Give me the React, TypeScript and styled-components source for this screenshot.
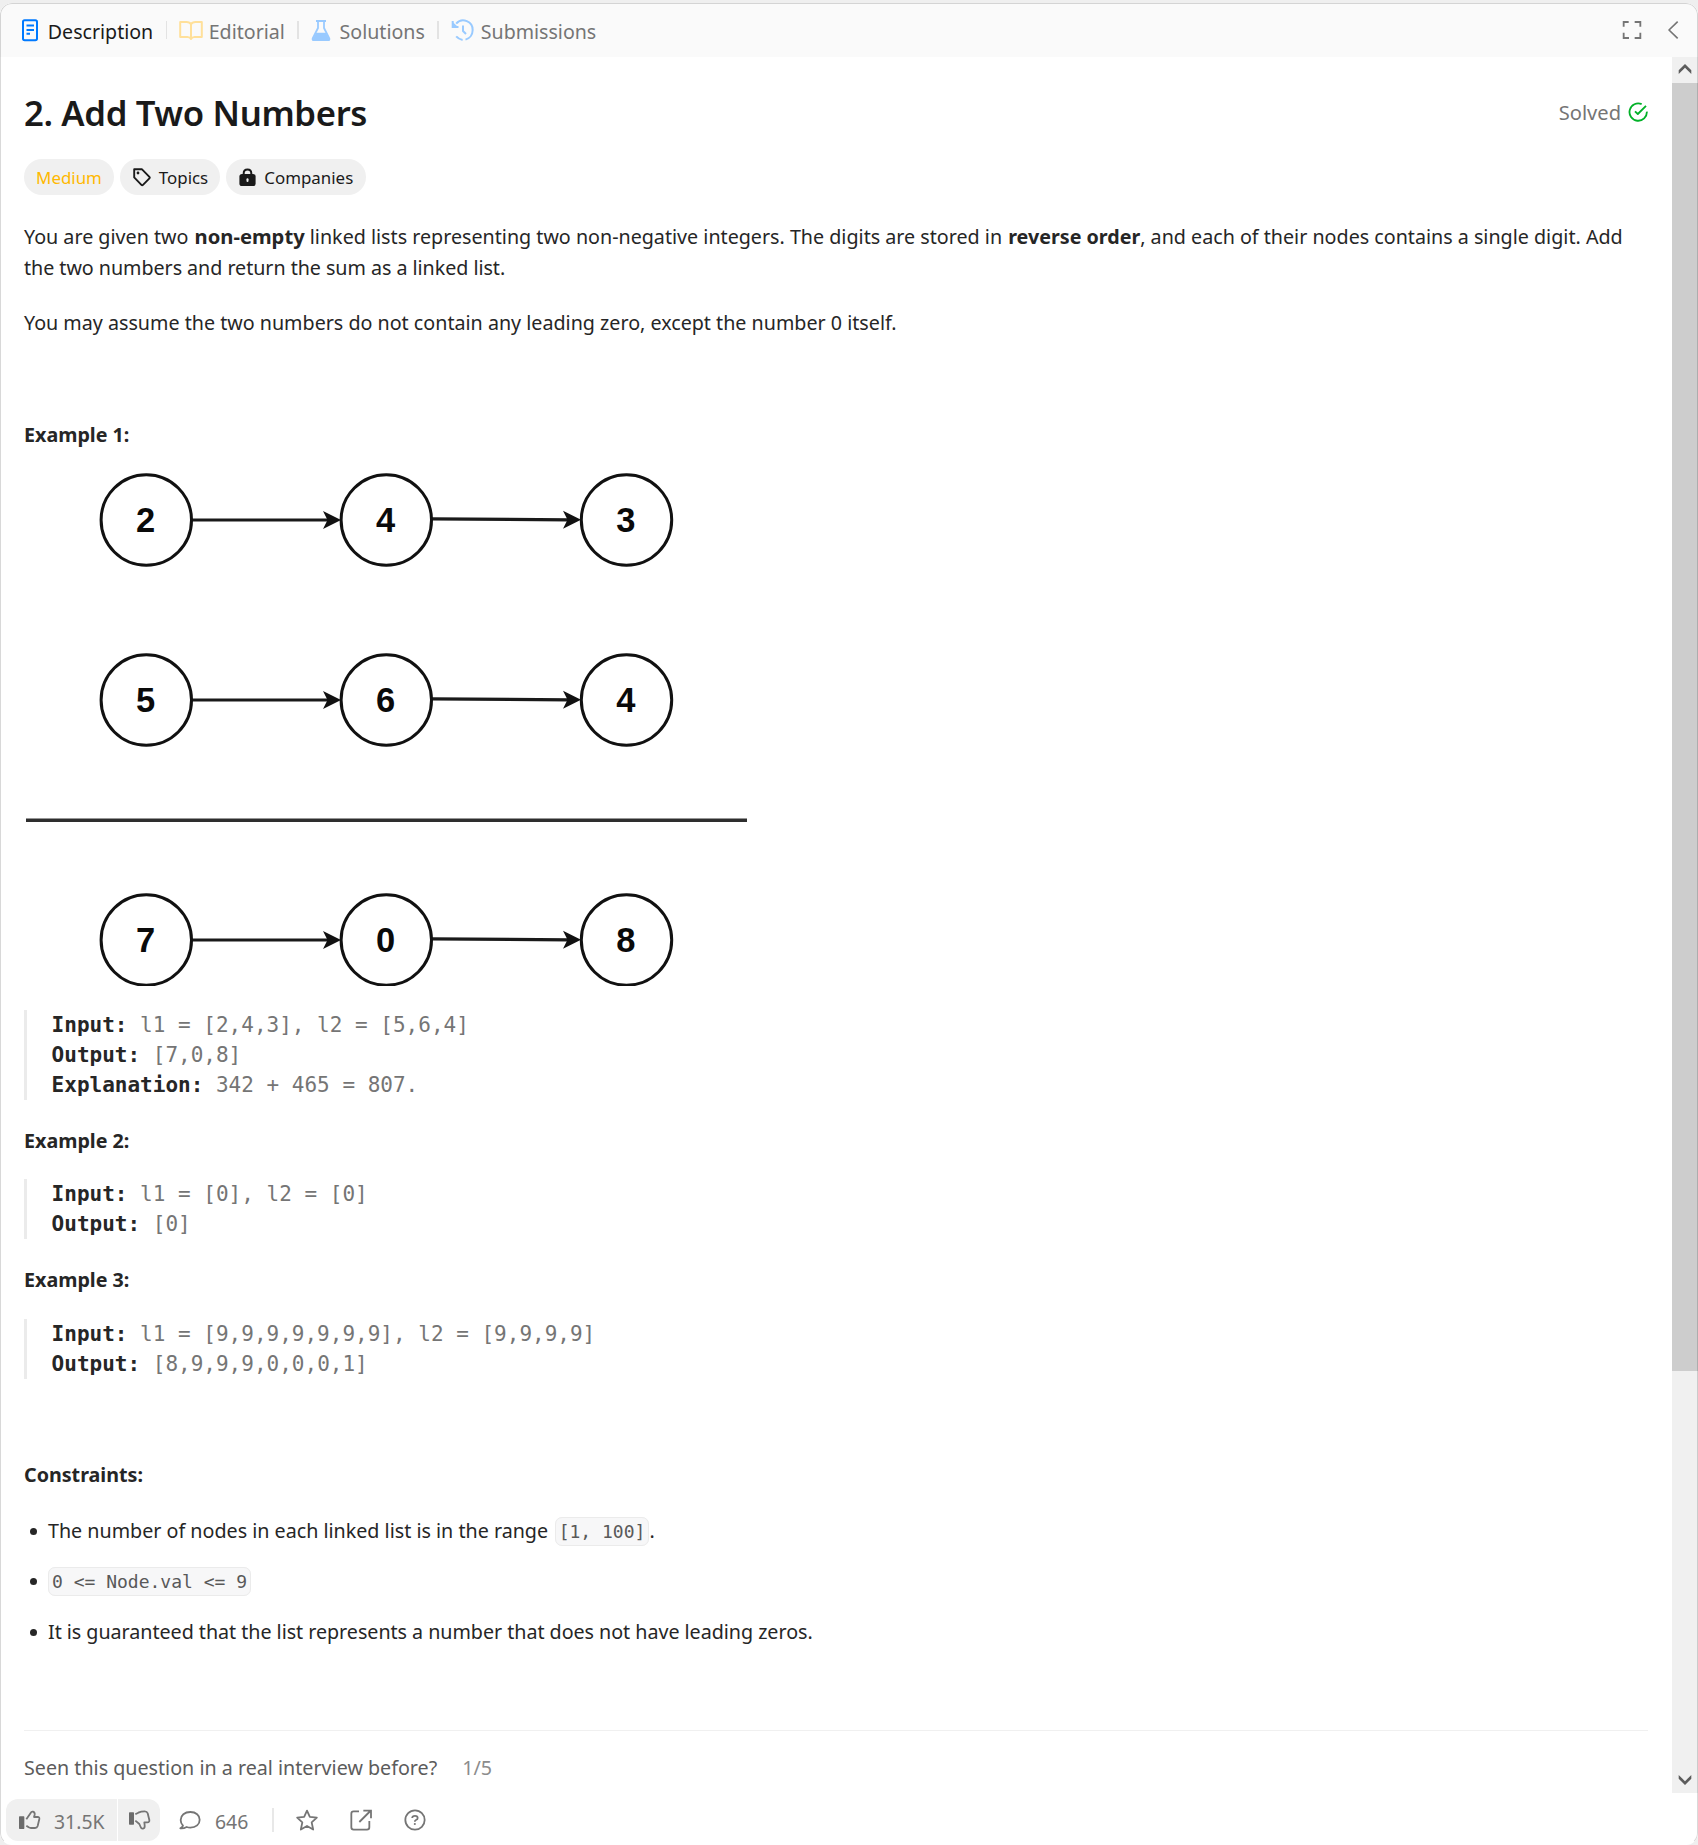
import React from "react";
import styled, { createGlobalStyle } from "styled-components";

const sans = `"Noto Sans", "Open Sans", sans-serif`;
const mono = `"DejaVu Sans Mono", monospace`;

const GlobalStyle = createGlobalStyle`
  * { box-sizing: border-box; }
  html, body { margin: 0; padding: 0; background: #efefef; }
  body { font-family: ${sans}; font-size: 19.7px; color: #262626; }
  svg { display: block; flex: none; }
`;

const Page = styled.div`
  height: 1845px;
  padding-top: 3px;
  overflow: hidden;
`;

const Panel = styled.section`
  position: relative;
  display: flex;
  flex-direction: column;
  height: 1842px;
  border-radius: 12px;
  overflow: hidden;
  background: #fff;
  &::after {
    content: "";
    position: absolute;
    inset: 0;
    border: 1px solid rgba(0, 0, 0, 0.15);
    border-bottom-color: transparent;
    border-radius: 12px;
    pointer-events: none;
  }
`;

const TabBar = styled.header`
  display: flex;
  align-items: center;
  height: 54px;
  flex: none;
  padding: 0 19px 0 21px;
  background: #fafafa;
`;

const Tab = styled.div<{ $gap: number; $active?: boolean }>`
  display: flex;
  align-items: center;
  gap: ${(p) => p.$gap}px;
  font-size: 19.6px;
  color: ${(p) => (p.$active ? "#1a1a1a" : "#757575")};
`;

const TabLabel = styled.span`
  padding-top: 3px;
  line-height: 27px;
`;

const TabDivider = styled.i`
  width: 1.5px;
  height: 18px;
  margin: 0 12.3px;
  background: #e3e3e3;
`;

const TabActions = styled.div`
  display: flex;
  align-items: center;
  gap: 25px;
  margin-left: auto;
`;

const Body = styled.div`
  display: flex;
  height: 1736px;
  flex: none;
`;

const Content = styled.main`
  flex: 1;
  padding: 0 24px;
`;

const TitleRow = styled.div`
  display: flex;
  justify-content: space-between;
  align-items: center;
  height: 48px;
  margin-top: 32px;
`;

const Title = styled.h1`
  margin: 0;
  font-size: 34.7px;
  font-weight: 600;
  line-height: 48px;
  letter-spacing: -0.36px;
  color: #1a1a1a;
`;

const Solved = styled.div`
  display: flex;
  align-items: center;
  gap: 7px;
  height: 27px;
  margin-top: -3px;
  font-size: 20.1px;
  line-height: 27px;
  color: #757575;
  span { padding-top: 1px; }
`;

const Tags = styled.div`
  display: flex;
  gap: 6px;
  margin-top: 22px;
`;

const Tag = styled.span<{ $width: number; $tone?: string; $gap?: number }>`
  display: flex;
  align-items: center;
  justify-content: center;
  gap: ${(p) => p.$gap ?? 0}px;
  width: ${(p) => p.$width}px;
  height: 36px;
  border-radius: 18px;
  background: #f0f0f0;
  color: ${(p) => p.$tone ?? "#1a1a1a"};
  font-size: 16.9px;
  line-height: 36px;
  span { padding-top: 1px; }
`;

const Prose = styled.article`
  margin-top: 27px;
  line-height: 30.6px;
`;

const Paragraph = styled.p<{ $after?: number }>`
  margin: 0 0 ${(p) => p.$after ?? 25.2}px;
  white-space: pre-wrap;
`;

const Emphasis = styled.strong<{ $size?: number }>`
  margin-left: 1px;
  font-size: ${(p) => p.$size ?? 19.7}px;
  line-height: 1;
`;

const Tracked = styled.span`
  letter-spacing: -0.04px;
`;

const Heading = styled.p<{ $after?: number }>`
  margin: 0 0 ${(p) => p.$after ?? 22.4}px;
  font-weight: 700;
`;

const Figure = styled.svg`
  margin-bottom: 24px;
  text { font: 700 34.5px "Liberation Sans", Arial, sans-serif; text-anchor: middle; }
`;

const Sample = styled.pre`
  margin: 0 0 26.2px;
  padding-left: 24.6px;
  border-left: 3px solid #ebebeb;
  font-family: ${mono};
  font-size: 21px;
  line-height: 30px;
  color: #757575;
  strong { color: #262626; }
`;

const List = styled.ul`
  margin: 0;
  padding: 0;
  list-style: none;
`;

const Item = styled.li<{ $tight?: boolean }>`
  display: flex;
  align-items: center;
  height: 30.6px;
  margin-bottom: 19.9px;
  letter-spacing: ${(p) => (p.$tight ? "-0.03px" : "0")};
  &::before {
    content: "";
    width: 7px;
    height: 7px;
    margin: 1px 11px 0 6px;
    border-radius: 50%;
    background: #262626;
  }
`;

const Code = styled.code<{ $left?: number }>`
  margin-left: ${(p) => p.$left ?? 0}px;
  padding: 3px;
  border: 1px solid #ebebeb;
  border-radius: 7px;
  background: #f7f7f8;
  font-family: ${mono};
  font-size: 18px;
  line-height: 1;
  color: #595959;
`;

const Survey = styled.div`
  display: flex;
  gap: 25px;
  margin-top: 83px;
  padding-top: 22px;
  border-top: 1px solid #f0f0f0;
  line-height: 29px;
  color: #5c5c5c;
`;

const SurveyCount = styled.span`
  color: #8c8c8c;
`;

const ScrollBar = styled.div`
  display: flex;
  flex-direction: column;
  width: 26px;
  background: #f0f0f0;
`;

const ScrollButton = styled.div<{ $lift?: number }>`
  display: flex;
  align-items: center;
  justify-content: center;
  height: 26px;
  padding-bottom: ${(p) => p.$lift ?? 0}px;
`;

const ScrollThumb = styled.div`
  height: 1288px;
  margin-bottom: auto;
  background: #cdcdcd;
`;

const Footer = styled.footer`
  display: flex;
  align-items: center;
  height: 42px;
  margin: 6px 0 0 6px;
  color: #757575;
`;

const VoteGroup = styled.div`
  display: flex;
  gap: 1px;
  height: 42px;
  border-radius: 12px;
  overflow: hidden;
`;

const Vote = styled.div<{ $width: number; $left: number }>`
  display: flex;
  align-items: center;
  width: ${(p) => p.$width}px;
  padding-left: ${(p) => p.$left}px;
  background: #f0f0f0;
`;

const Count = styled.span<{ $left: number }>`
  width: 53px;
  margin-left: ${(p) => p.$left}px;
  padding-top: 2px;
  font-size: 19.4px;
  line-height: 27px;
`;

const FooterDivider = styled.i`
  width: 2px;
  height: 24px;
  margin-left: 4px;
  background: #e8e8e8;
`;

const FooterAction = styled.span<{ $left: number }>`
  margin-left: ${(p) => p.$left}px;
`;

type GlyphProps = {
  w: number;
  h: number;
  box: string;
  color?: string;
  stroke?: number;
  children: React.ReactNode;
};

const Glyph = ({ w, h, box, color = "#757575", stroke = 5.4, children }: GlyphProps) => (
  <svg width={w} height={h} viewBox={box} fill="none" stroke={color} strokeWidth={stroke} strokeLinejoin="round">
    {children}
  </svg>
);

const DocIcon = () => (
  <Glyph w={18} h={24} box="21 18 18 24" color="#007aff" stroke={2}>
    <rect x="23" y="20.2" width="14" height="20" rx="1.6" />
    <path d="M26.5 25.5h7.5M26.5 30h7.5M26.5 33.8h3.5" />
  </Glyph>
);

const BookIcon = () => (
  <Glyph w={24} h={24} box="179 18 24 24" color="#ffe09a" stroke={2}>
    <path d="M191 24.2C190.2 22.8 188.6 22 186.6 22H180.2V37H187.4C189.4 37 190.4 37.8 191 39C191.6 37.8 192.6 37 194.6 37H201.8V22H195.4C193.4 22 191.8 22.8 191 24.2V38" />
  </Glyph>
);

const FlaskIcon = () => (
  <Glyph w={20} h={24} box="312 18 20 24" color="#99caff" stroke={1.8}>
    <path d="M317 21h10M319 21v7L313.8 38.2Q313 40.2 315 40.2H329Q331 40.2 330.2 38.2L325 28V21" />
    <path d="M317 32.8H327L330.5 39.4L329.5 41H314.5L313.5 39.4Z" fill="#99caff" stroke="none" />
  </Glyph>
);

const HistoryIcon = () => (
  <Glyph w={23.5} h={24} box="452 18 23.5 24" color="#99caff" stroke={2}>
    <path d="M457.2 23.6A9.4 9.4 0 0 1 473.6 30.4A9.6 9.6 0 0 1 466.5 39.6M463.6 39.9Q459.6 39.2 457.2 36.4" />
    <path d="M453.7 21V27H459.5" strokeLinejoin="miter" />
    <path d="M453.5 27H459L453.7 22Z" fill="#99caff" stroke="none" />
    <path d="M464 25.5V31L467 34" />
  </Glyph>
);

const ExpandIcon = () => (
  <Glyph w={20} h={20} box="367 60 60 60" stroke={5.5}>
    <path strokeLinejoin="miter" d="M372 80V66H387M405 66H422V80M422 98V114H405M388 114H372V98" />
  </Glyph>
);

const CollapseIcon = () => (
  <Glyph w={12} h={20} box="500 60 36 60" stroke={5}>
    <path d="M532 65L506 90L532 115" />
  </Glyph>
);

const SolvedIcon = () => (
  <Glyph w={20} h={20} box="382 305 60 60" color="#02b128" stroke={5.5}>
    <path d="M438.5 334A26 26 0 1 1 423 311.5" />
    <path d="M403 333L411.5 341L436 316.5" />
  </Glyph>
);

const TagIcon = () => (
  <Glyph w={20} h={20} box="133 167 20 20" color="#1a1a1a" stroke={1.9}>
    <path d="M135.2 169.2H142.8L150.4 176.8Q151.2 177.6 150.4 178.4L144 184.8Q143.2 185.6 142.4 184.8L135.2 177.4Z" />
    <circle cx="139" cy="173" r="1.4" fill="#1a1a1a" stroke="none" />
  </Glyph>
);

const LockIcon = () => (
  <Glyph w={17} h={20} box="240 168 17 20" color="#1a1a1a" stroke={2}>
    <path d="M244.7 176V174.3Q244.7 170.6 248.5 170.6Q252.3 170.6 252.3 174.3V176" />
    <rect x="240.4" y="175" width="16.2" height="12" rx="2.6" fill="#1a1a1a" stroke="none" />
    <path d="M248.5 180.2V182" stroke="#f0f0f0" strokeLinecap="round" />
  </Glyph>
);

const LikeIcon = () => (
  <Glyph w={24} h={22} box="55 58 72 66">
    <rect x="58" y="80" width="16" height="38" rx="2" fill="#6b6b6b" stroke="none" />
    <path d="M80 89L93 70Q95 65 100 66Q106 68 105 75L103 82H114Q120 82 119 88L114 109Q112 115 106 115H94Q90 115 87 113L80 108" />
  </Glyph>
);

const DislikeIcon = () => (
  <Glyph w={24} h={22} box="382 58 72 66">
    <rect x="385" y="68" width="15" height="37" rx="2" fill="#6b6b6b" stroke="none" />
    <path d="M404 74L413 69Q421 65 432 65Q439 65 441 71L446 91Q447 98 440 98H431L432 107Q433 116 427 117Q422 118 420 112L416 103L404 93" />
  </Glyph>
);

const CommentIcon = () => (
  <Glyph w={24} h={22} box="534 57 72 66">
    <path d="M549 107Q542 100 542 90C542 76 554 66 571 66C588 66 599 76 599 89C599 103 588 113 571 113Q565 113 560 111Q551 116 541 115Q547 112 549 107Z" />
  </Glyph>
);

const StarIcon = () => (
  <Glyph w={24} h={24} box="165 54 72 72">
    <path d="M201 62L209.5 80.5L230.5 83L215 97L219.5 118.5L201 108L182.5 118.5L187 97L171.5 83L192.5 80.5Z" />
  </Glyph>
);

const ShareIcon = () => (
  <Glyph w={24} h={24} box="327 54 72 72">
    <path d="M357 64H341Q334 64 334 71V112Q334 119 341 119H381Q388 119 388 112V93" />
    <path d="M358 96L391 63M370 62H393V85" strokeLinejoin="miter" />
  </Glyph>
);

const HelpIcon = () => (
  <Glyph w={24} h={24} box="489 54 72 72">
    <circle cx="525" cy="90" r="29" />
    <path d="M516.500 84Q517 77.500 525 77.500Q533 77.500 533 84Q533 88 528 90Q524.500 91.500 524.500 95" />
    <circle cx="524.500" cy="102" r="3.200" fill="#757575" stroke="none" />
  </Glyph>
);

const ScrollArrow = ({ down }: { down?: boolean }) => (
  <svg width="14" height="10" viewBox="0 0 14 10" fill="#5c5c5c">
    <path d={down ? "M7 10L13.300 3.700V0L7 6.200L0.700 0V3.700Z" : "M7 0L13.300 6.300V10L7 3.800L0.700 10V6.300Z"} />
  </svg>
);

const rows = [
  { y: 47, values: ["2", "4", "3"] },
  { y: 227, values: ["5", "6", "4"] },
  { y: 467, values: ["7", "0", "8"] },
];
const columns = [122.3, 362.3, 602.5];

const ArrowHead = ({ x, y }: { x: number; y: number }) => (
  <path d={`M${x} ${y}l-18 -9l4.500 9l-4.500 9z`} fill="#111" />
);

const ListDiagram = () => (
  <Figure width="724" height="513" viewBox="0 0 724 513" fill="none" stroke="none">
    {rows.map((row) => (
      <g key={row.y}>
        <path
          d={`M168 ${row.y}H304M408 ${row.y - 1.2}L545 ${row.y - 0.2}`}
          stroke="#1a1a1a"
          strokeWidth="3.200"
        />
        <ArrowHead x={317} y={row.y} />
        <ArrowHead x={557} y={row.y - 0.2} />
        {row.values.map((value, i) => (
          <g key={i}>
            <circle cx={columns[i]} cy={row.y} r="45.200" stroke="#111" strokeWidth="3" />
            <text x={columns[i] - 0.7} y={row.y + 12.4} fill="#0a0a0a">{value}</text>
          </g>
        ))}
      </g>
    ))}
    <path d="M2 347.200H723" stroke="#2e2e2e" strokeWidth="3.400" />
  </Figure>
);

const samples = [
  [["Input:", "l1 = [2,4,3], l2 = [5,6,4]"], ["Output:", "[7,0,8]"], ["Explanation:", "342 + 465 = 807."]],
  [["Input:", "l1 = [0], l2 = [0]"], ["Output:", "[0]"]],
  [["Input:", "l1 = [9,9,9,9,9,9,9], l2 = [9,9,9,9]"], ["Output:", "[8,9,9,9,0,0,0,1]"]],
];

const SampleBlock = ({ lines }: { lines: string[][] }) => (
  <Sample>
    {lines.map(([label, value]) => (
      <React.Fragment key={label}>
        <strong>{label}</strong> {value}
        {"\n"}
      </React.Fragment>
    ))}
  </Sample>
);

export default function App() {
  return (
    <>
      <GlobalStyle />
      <Page>
        <Panel>
          <TabBar>
            <Tab $gap={8.8} $active><DocIcon /><TabLabel>Description</TabLabel></Tab>
            <TabDivider />
            <Tab $gap={5.4}><BookIcon /><TabLabel>Editorial</TabLabel></Tab>
            <TabDivider />
            <Tab $gap={8.6}><FlaskIcon /><TabLabel>Solutions</TabLabel></Tab>
            <TabDivider />
            <Tab $gap={6.4}><HistoryIcon /><TabLabel>Submissions</TabLabel></Tab>
            <TabActions><ExpandIcon /><CollapseIcon /></TabActions>
          </TabBar>
          <Body>
            <Content>
              <TitleRow>
                <Title>2. Add Two Numbers</Title>
                <Solved><span>Solved</span><SolvedIcon /></Solved>
              </TitleRow>
              <Tags>
                <Tag $width={90} $tone="#ffb800"><span>Medium</span></Tag>
                <Tag $width={100} $gap={7}><TagIcon /><span>Topics</span></Tag>
                <Tag $width={140} $gap={8.5}><LockIcon /><span>Companies</span></Tag>
              </Tags>
              <Prose>
                <Paragraph>
                  You are given two <Emphasis $size={20.2}>non-empty</Emphasis> linked lists representing two non-negative integers. The digits are stored in <Emphasis>reverse order</Emphasis>, and each of their nodes contains a single digit. Add
                  <br />
                  <Tracked>the two numbers and return the sum as a linked list.</Tracked>
                </Paragraph>
                <Paragraph>
                  You may assume the two numbers do not contain any leading zero, except the number 0 itself.
                </Paragraph>
                <Paragraph>&nbsp;</Paragraph>
                <Heading>Example 1:</Heading>
                <ListDiagram />
                <SampleBlock lines={samples[0]} />
                <Heading>Example 2:</Heading>
                <SampleBlock lines={samples[1]} />
                <Heading $after={23.4}>Example 3:</Heading>
                <SampleBlock lines={samples[2]} />
                <Paragraph $after={24}>&nbsp;</Paragraph>
                <Heading $after={25}>Constraints:</Heading>
                <List>
                  <Item><span>The number of nodes in each linked list is in the range <Code $left={1.5}>[1, 100]</Code>.</span></Item>
                  <Item><span><Code>{"0 <= Node.val <= 9"}</Code></span></Item>
                  <Item $tight><span>It is guaranteed that the list represents a number that does not have leading zeros.</span></Item>
                </List>
              </Prose>
              <Survey>
                <span>Seen this question in a real interview before?</span>
                <SurveyCount>1/5</SurveyCount>
              </Survey>
            </Content>
            <ScrollBar>
              <ScrollButton $lift={2}><ScrollArrow /></ScrollButton>
              <ScrollThumb />
              <ScrollButton><ScrollArrow down /></ScrollButton>
            </ScrollBar>
          </Body>
          <Footer>
            <VoteGroup>
              <Vote $width={111} $left={12}><LikeIcon /><Count $left={12}>31.5K</Count></Vote>
              <Vote $width={42} $left={9.5}><DislikeIcon /></Vote>
            </VoteGroup>
            <FooterAction $left={18}><CommentIcon /></FooterAction>
            <Count $left={13}>646</Count>
            <FooterDivider />
            <FooterAction $left={21}><StarIcon /></FooterAction>
            <FooterAction $left={30}><ShareIcon /></FooterAction>
            <FooterAction $left={30}><HelpIcon /></FooterAction>
          </Footer>
        </Panel>
      </Page>
    </>
  );
}
